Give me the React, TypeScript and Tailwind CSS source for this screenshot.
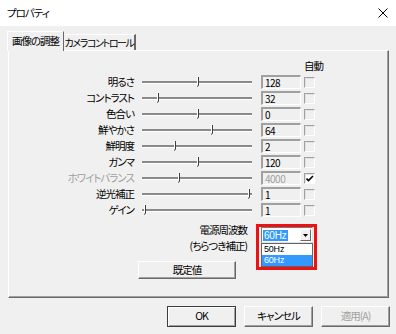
const rows = [
  { label: "明るさ", pos: 56, value: "128" },
  { label: "コントラスト", pos: 16, value: "32" },
  { label: "色合い", pos: 56, value: "0" },
  { label: "鮮やかさ", pos: 70, value: "64" },
  { label: "鮮明度", pos: 33, value: "2" },
  { label: "ガンマ", pos: 56, value: "120" },
  { label: "ホワイトバランス", pos: 37, value: "4000", disabled: true, checked: true },
  { label: "逆光補正", pos: 107, value: "1" },
  { label: "ゲイン", pos: 3, value: "1" },
];

function Slider({ pos }: { pos: number }) {
  return (
    <div className="relative w-[110px] h-[16px] ml-[8px]">
      <div className="absolute left-0 right-0 top-[7px] h-[2px] bg-[#8a8a8a] shadow-[0_1px_#ffffff]" />
      <svg className="absolute top-[3px]" style={{ left: pos - 2 }} width="4" height="10">
        <path d="M1.5 0V8" stroke="#ffffff" />
        <path d="M2.5 0V8.5L1 9.5" stroke="#3c3c3c" fill="none" />
      </svg>
    </div>
  );
}

function Check({ checked }: { checked?: boolean }) {
  return (
    <div
      className={`w-[11px] h-[11px] ml-[3px] border-t border-l border-t-[#a0a0a0] border-l-[#a0a0a0] border-r border-b border-r-white border-b-white shadow-[inset_1px_1px_#e3e3e3] flex items-center justify-center ${
        checked ? "bg-white" : "bg-[#f0f0f0]"
      }`}
    >
      {checked && (
        <svg width="8" height="7" viewBox="0 0 8 7">
          <path d="M0.5 3.5L2.5 5.5L7 1" stroke="#000" strokeWidth="1.6" fill="none" />
        </svg>
      )}
    </div>
  );
}

function Btn({
  children,
  w,
  h,
  def,
  disabled,
}: {
  children: string;
  w: string;
  h: string;
  def?: boolean;
  disabled?: boolean;
}) {
  const edge = def
    ? "border border-[#3c3c3c] shadow-[inset_1px_1px_#ffffff,inset_-1px_-1px_#a0a0a0]"
    : "border border-t-white border-l-white border-r-[#696969] border-b-[#696969] shadow-[inset_-1px_-1px_#a0a0a0]";
  return (
    <div
      className={`${w} ${h} ${edge} bg-[#f0f0f0] flex items-center justify-center ${
        disabled ? "text-[#a0a0a0]" : "text-black"
      }`}
    >
      {children}
    </div>
  );
}

export default function App() {
  return (
    <div className="w-[396px] h-[334px] bg-[#f0f0f0] flex flex-col font-['Noto_Sans_CJK_JP',sans-serif] [font-feature-settings:'palt'] text-[10.5px] tracking-[-1px] text-black leading-none overflow-hidden whitespace-nowrap">
      {/* title bar */}
      <div className="h-[26px] bg-white flex items-center justify-between pl-[7px] pr-[8px] shrink-0">
        <span>プロパティ</span>
        <svg width="10" height="10" viewBox="0 0 10 10" className="mb-[1px]">
          <path d="M0.5 0.5L9.5 9.5M9.5 0.5L0.5 9.5" stroke="#000" strokeWidth="1" />
        </svg>
      </div>

      {/* tabs */}
      <div className="flex items-end h-[19px] mt-[5px] ml-[7px] shrink-0">
        <div className="relative z-10 -mb-px h-[20px] w-[57px] bg-[#f0f0f0] border-t border-l border-t-white border-l-white border-r border-r-[#696969] flex items-center justify-center">
          画像の調整
        </div>
        <div className="h-[16px] w-[72px] border-t border-t-white border-r-2 border-r-[#696969] flex items-center justify-center text-[10px] tracking-[-1.4px]">
          カメラコントロール
        </div>
      </div>

      {/* panel */}
      <div className="ml-[8px] w-[381px] h-[248px] shrink-0 border-t border-l border-t-white border-l-white border-r border-b border-r-[#696969] border-b-[#696969] shadow-[inset_-1px_-1px_#a0a0a0] flex flex-col pt-[7px]">
        <div className="h-[16px] flex items-center pl-[295px]">自動</div>

        {rows.map((r) => (
          <div key={r.label} className="h-[16px] flex items-center">
            <div className={`w-[125px] text-right ${r.disabled ? "text-[#a0a0a0]" : ""}`}>{r.label}</div>
            <Slider pos={r.pos} />
            <div
              className={`ml-[9px] w-[40px] h-[14px] bg-[#f0f0f0] border-t-2 border-l-2 border-t-[#a0a0a0] border-l-[#a0a0a0] border-r border-b border-r-white border-b-white flex items-center pl-[2px] text-[10px] tracking-[-0.5px] ${
                r.disabled ? "text-[#a0a0a0]" : ""
              }`}
            >
              {r.value}
            </div>
            <Check checked={r.checked} />
          </div>
        ))}

        <div className="flex mt-[4px]">
          <div className="w-[238px] flex flex-col">
            <div className="text-right leading-[16px]">電源周波数</div>
            <div className="text-right leading-[16px]">(ちらつき補正)</div>
            <div className="mt-[7px] ml-[129px]">
              <Btn w="w-[98px]" h="h-[18px]">既定値</Btn>
            </div>
          </div>

          <div className="ml-[9px] mt-[2px] w-[61px] h-[46px] border-[3px] border-[#ee1111] pl-[2px] flex flex-col font-['Liberation_Sans',sans-serif] tracking-[-0.2px]">
            <div className="w-[52px] h-[16px] bg-white border-t border-l border-t-[#7a7a7a] border-l-[#7a7a7a] border-r border-b border-r-[#e3e3e3] border-b-[#e3e3e3] flex items-center pl-[1px] pr-[1px]">
              <span className="bg-[#3399ff] text-white px-[1px] leading-[11px] text-[10px]">60Hz</span>
              <div className="ml-auto w-[11px] h-[12px] bg-[#f0f0f0] border-t border-l border-t-white border-l-white border-r border-b border-r-[#696969] border-b-[#696969] flex items-center justify-center">
                <svg width="5" height="3" viewBox="0 0 5 3">
                  <path d="M0 0H5L2.5 3Z" fill="#000" />
                </svg>
              </div>
            </div>
            <div className="w-[52px] h-[24px] bg-white border border-[#646464] flex flex-col text-[9px]">
              <div className="h-[11px] leading-[11px] pl-[2px]">50Hz</div>
              <div className="h-[11px] leading-[11px] pl-[2px] bg-[#3399ff] text-white">60Hz</div>
            </div>
          </div>
        </div>
      </div>

      {/* buttons */}
      <div className="flex justify-end gap-[8px] mt-[8px] pr-[6px]">
        <Btn w="w-[69px]" h="h-[21px]" def>
          OK
        </Btn>
        <Btn w="w-[69px]" h="h-[21px]">キャンセル</Btn>
        <Btn w="w-[69px]" h="h-[21px]" disabled>
          適用(A)
        </Btn>
      </div>
    </div>
  );
}
